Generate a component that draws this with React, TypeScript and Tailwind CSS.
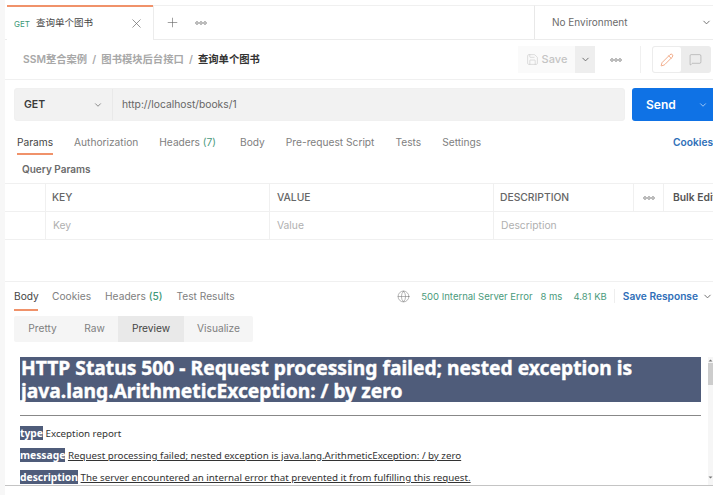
import React from "react";
import { ChevronDown, Plus, X, Globe, Save, Pencil, MessageSquare } from "lucide-react";

const cjk = "font-['Inter','Noto_Sans_CJK_SC',sans-serif]";

function Dots({ className = "" }: { className?: string }) {
  return (
    <svg width="12" height="4" viewBox="0 0 12 4" className={className} fill="none" stroke="#777" strokeWidth="0.8">
      <circle cx="2" cy="2" r="1.3" />
      <circle cx="6" cy="2" r="1.3" />
      <circle cx="10" cy="2" r="1.3" />
    </svg>
  );
}

function Arrow({ up }: { up?: boolean }) {
  return (
    <svg width="5" height="3" viewBox="0 0 5 3" fill="#777">
      <path d={up ? "M2.5 0.5 L4.5 2.5 L0.5 2.5 Z" : "M2.5 2.5 L4.5 0.5 L0.5 0.5 Z"} />
    </svg>
  );
}

export default function App() {
  return (
    <div className={`w-[722px] h-[495px] overflow-hidden bg-white flex ${cjk}`}>
      <div className="w-[5px] shrink-0 bg-[#f7f7f7]" />
      <div className="w-[708px] shrink-0 h-[486px] overflow-hidden flex flex-col border-b border-[#c4c4c4]">
        {/* Tab bar */}
        <div className="h-[35px] mt-[5px] shrink-0 flex border-b border-[#ececec]">
          <div className="w-[146px] ml-[2px] h-[35px] bg-white border-t-2 border-[#f0926a] flex items-center pl-[7px] pr-[9px]">
            <span className="text-[8px] text-[#3e9a78] w-[22px]">GET</span>
            <span className="text-[9.5px] text-[#444] flex-1">查询单个图书</span>
            <X size={15} strokeWidth={1.1} className="text-[#666]" />
          </div>
          <div className="flex-1 flex items-center border-t border-[#f0f0f0] bg-white pl-[11px] border-l border-l-[#ececec]">
            <Plus size={15} strokeWidth={1} className="text-[#666]" />
            <Dots className="ml-[15px]" />
          </div>
          <div className="w-[179px] flex items-center border-t border-[#f0f0f0] border-l border-l-[#e8e8e8] pl-[17px] pr-[1px]">
            <span className="text-[10px] text-[#6b6b6b] flex-1">No Environment</span>
            <ChevronDown size={11} className="text-[#666]" />
          </div>
        </div>

        {/* Breadcrumb */}
        <div className="h-[40px] shrink-0 flex items-center border-b border-[#f0f0f0] pl-[18px]">
          <span className="text-[10.3px] font-semibold text-[#a8a8a8] whitespace-pre">SSM整合案例  /  图书模块后台接口  /  </span>
          <span className="text-[10.3px] font-bold text-[#333]">查询单个图书</span>
          <div className="ml-auto flex items-center">
            <div className="h-[27px] w-[57px] bg-[#fafafa] flex items-center justify-center gap-[3px] text-[11px] font-medium text-[#c4c4c4]">
              <Save size={13} strokeWidth={1} />
              Save
            </div>
            <div className="h-[27px] w-[20px] bg-[#eeeeee] flex items-center justify-center">
              <ChevronDown size={11} className="text-[#666]" />
            </div>
            <Dots className="ml-[15px]" />
            <div className="w-px h-[27px] bg-[#f0f0f0] ml-[18px]" />
            <div className="ml-[11px] w-[59px] h-[27px] bg-[#ececec] rounded-[3px] flex p-[1px]">
              <div className="w-[28px] bg-white rounded-[2px] flex items-center justify-center">
                <Pencil size={14} strokeWidth={1} className="text-[#e8743b]" />
              </div>
              <div className="flex-1 flex items-center justify-center">
                <MessageSquare size={13} strokeWidth={1} className="text-[#999]" />
              </div>
            </div>
          </div>
          <div className="w-[2px]" />
        </div>

        {/* URL bar */}
        <div className="h-[33px] mt-[8px] shrink-0 flex ml-[9px]">
          <div className="flex-1 flex bg-[#f2f2f2] rounded-[3px] border border-[#f0f0f0]">
            <div className="w-[98px] flex items-center border-r border-[#e9e9e9] pl-[9px] pr-[9px]">
              <span className="text-[10.5px] font-semibold text-[#3a3a3a] flex-1">GET</span>
              <ChevronDown size={10} className="text-[#777]" />
            </div>
            <div className="flex-1 flex items-center pl-[9px] text-[10.3px] text-[#666]">http://localhost/books/1</div>
          </div>
          <div className="w-[81px] ml-[7px] bg-[#0f72e5] rounded-l-[3px] flex items-center pl-[14px] pr-[5px] text-white">
            <span className="text-[12px] font-semibold flex-1">Send</span>
            <ChevronDown size={10} className="text-[#b8d6f8]" />
          </div>
        </div>

        {/* Request tabs */}
        <div className="h-[25px] mt-[9px] shrink-0 flex items-start pt-[5px] text-[10.2px] text-[#808080] relative whitespace-nowrap">
          <div className="ml-[12px] w-[36px] h-[20px] text-[#444] relative">
            Params
            <div className="absolute left-0 right-0 top-[18px] h-[2px] bg-[#f0926a]" />
          </div>
          <span className="ml-[21px]">Authorization</span>
          <span className="ml-[21px]">Headers <span className="text-[#4a9a7c]">(7)</span></span>
          <span className="ml-[24px]">Body</span>
          <span className="ml-[21px]">Pre-request Script</span>
          <span className="ml-[21px]">Tests</span>
          <span className="ml-[21px]">Settings</span>
          <span className="ml-auto text-[#2f6fb8] font-semibold">Cookies</span>
        </div>

        {/* Query params */}
        <div className="h-[28px] shrink-0 flex items-center pl-[17px] text-[10px] font-semibold text-[#6b6b6b]">Query Params</div>
        <div className="shrink-0 border-t border-[#f0f0f0] text-[10.3px]">
          <div className="h-[28px] flex border-b border-[#f0f0f0] font-medium text-[#666]">
            <div className="w-[41px] border-r border-[#f0f0f0]" />
            <div className="w-[224px] border-r border-[#f0f0f0] flex items-center pl-[6px]">KEY</div>
            <div className="w-[224px] border-r border-[#f0f0f0] flex items-center pl-[7px]">VALUE</div>
            <div className="w-[140px] border-r border-[#f0f0f0] flex items-center pl-[6px]">DESCRIPTION</div>
            <div className="w-[30px] border-r border-[#f0f0f0] flex items-center justify-center"><Dots /></div>
            <div className="flex-1 min-w-0 flex items-center pl-[9px] font-semibold text-[#555] whitespace-nowrap">Bulk Edit</div>
          </div>
          <div className="h-[28px] flex border-b border-[#f0f0f0] text-[#b0b0b0]">
            <div className="w-[41px] border-r border-[#f0f0f0]" />
            <div className="w-[224px] border-r border-[#f0f0f0] flex items-center pl-[7px]">Key</div>
            <div className="w-[224px] border-r border-[#f0f0f0] flex items-center pl-[7px]">Value</div>
            <div className="flex-1 flex items-center pl-[7px]">Description</div>
          </div>
        </div>

        {/* Response */}
        <div className="h-[41px] shrink-0" />
        <div className="shrink-0 h-[28px] border-t border-[#f0f0f0] flex items-start pt-[7px] text-[10.2px] text-[#808080] whitespace-nowrap">
          <div className="ml-[9px] w-[24px] h-[21px] text-[#444] relative">
            Body
            <div className="absolute left-0 right-0 top-[20px] h-[2px] bg-[#f0926a]" />
          </div>
          <span className="ml-[14px]">Cookies</span>
          <span className="ml-[14px]">Headers <span className="text-[#3f9a78] font-medium">(5)</span></span>
          <span className="ml-[14px]">Test Results</span>
          <Globe size={13} strokeWidth={1} className="ml-auto mt-[1px] text-[#777]" />
          <span className="ml-[11px] text-[9.5px] leading-[15px] text-[#4a9a7c]">500 Internal Server Error</span>
          <span className="ml-[8px] text-[9.5px] leading-[15px] text-[#4a9a7c]">8 ms</span>
          <span className="ml-[11px] text-[9.5px] leading-[15px] text-[#4a9a7c]">4.81 KB</span>
          <div className="ml-[7px] w-px h-[14px] bg-[#eeeeee]" />
          <span className="ml-[8px] text-[#2f6fb8] font-semibold">Save Response</span>
          <ChevronDown size={11} className="ml-[4px] mt-[2px] text-[#666]" />
        </div>

        <div className="shrink-0 mt-[7px] ml-[9px] w-[239px] h-[26px] bg-[#f5f5f5] rounded-[2px] flex text-[10.2px] text-[#808080]">
          <div className="w-[57px] flex items-center justify-center">Pretty</div>
          <div className="w-[47px] flex items-center justify-center">Raw</div>
          <div className="w-[66px] flex items-center justify-center bg-[#e9e9e9] text-[#444]">Preview</div>
          <div className="flex-1 flex items-center justify-center">Visualize</div>
        </div>

        {/* Preview */}
        <div className="flex-1 min-h-0 flex mt-[15px] overflow-hidden">
          <div className="w-[681px] ml-[15px] shrink-0 font-['Noto_Sans',sans-serif]">
            <h1 className="bg-[#4f5c7a] text-white font-bold text-[19.25px] leading-[22.5px] pl-[1px] [-webkit-text-stroke:0.4px_white]">HTTP Status 500 - Request processing failed; nested exception is<br />java.lang.ArithmeticException: / by zero</h1>
            <div className="h-px bg-[#888] mt-[13px]" />
            <div className="mt-[11px] text-[9.75px] text-[#333] leading-[12px]">
              <p><b className="bg-[#4f5c7a] text-white text-[10.3px]">type</b> Exception report</p>
              <p className="mt-[9px]"><b className="bg-[#4f5c7a] text-white text-[10.3px]">message</b> <u>Request processing failed; nested exception is java.lang.ArithmeticException: / by zero</u></p>
              <p className="mt-[9px]"><b className="bg-[#4f5c7a] text-white text-[10.3px]">description</b> <u>The server encountered an internal error that prevented it from fulfilling this request.</u></p>
            </div>
          </div>
          <div className="ml-[7px] w-[5px] bg-[#f6f6f6] flex flex-col items-center pt-[2px]">
            <Arrow up />
            <div className="w-[5px] h-[22px] mt-[1px] bg-[#cdcdcd]" />
            <div className="mt-auto mb-[6px]"><Arrow /></div>
          </div>
        </div>
      </div>
    </div>
  );
}
